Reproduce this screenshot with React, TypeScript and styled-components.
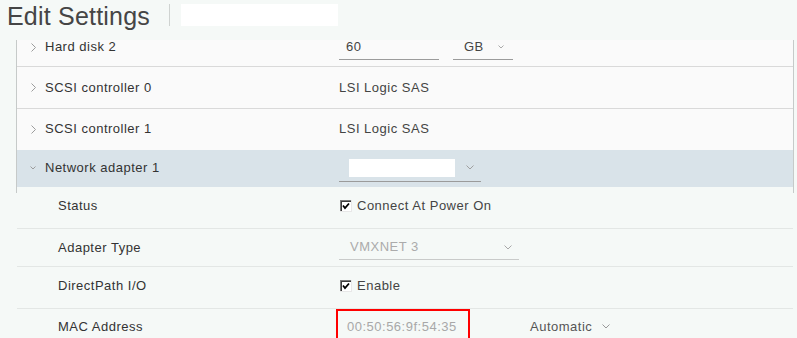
import styled, { createGlobalStyle } from 'styled-components'

const GlobalStyle = createGlobalStyle`
    html, body {
        margin: 0;
        padding: 0;
        background: #f5f9f7;
    }
    body {
        font-family: "Liberation Sans", Arial, sans-serif;
        font-size: 13px;
        letter-spacing: 0.5px;
        color: #333;
        overflow: hidden;
    }
`

const Page = styled.div`
    width: 797px;
    height: 338px;
    overflow: hidden;
`

const Header = styled.div`
    display: flex;
    align-items: flex-start;
    height: 40px;
    padding: 1px 0 0 7px;
    box-sizing: border-box;
`

const Title = styled.h1`
    margin: 0;
    font-size: 25px;
    line-height: 30px;
    font-weight: 300;
    color: #454545;
    letter-spacing: 0.2px;
`

const Divider = styled.div`
    width: 1px;
    height: 22px;
    margin: 3px 11px 0 19px;
    background: #cfd3d1;
`

const NameBox = styled.div`
    width: 157px;
    height: 22px;
    margin-top: 3px;
    background: #fff;
`

const Panel = styled.div`
    margin-left: 16px;
    width: 778px;
    box-sizing: border-box;
    border-left: 1px solid #c6cac9;
    border-right: 1px solid #c6cac9;
    padding-bottom: 6px;
    overflow: hidden;
`

/* the list is scrolled a little, so the first row is cut at the top */
const ScrollBody = styled.div`
    margin-top: -12px;
`

const Row = styled.div<{ $h: number; $bg?: string; $line?: string; $pb?: number }>`
    display: grid;
    grid-template-columns: 322px 1fr;
    align-items: center;
    height: ${(p) => p.$h}px;
    box-sizing: border-box;
    padding-bottom: ${(p) => p.$pb ?? 0}px;
    background: ${(p) => p.$bg ?? '#fafafa'};
    border-bottom: 1px solid ${(p) => p.$line ?? '#d9d9d9'};
`

const SubList = styled.div`
    margin-left: 17px;
    width: 776px;
`

const Label = styled.div<{ $indent: number }>`
    display: flex;
    align-items: center;
    gap: 9px;
    padding-left: ${(p) => p.$indent}px;
    line-height: 16px;
    color: #333;
`

const Value = styled.div`
    display: flex;
    align-items: center;
    line-height: 16px;
    color: #444;
`

const TextInput = styled.div<{ $w: number; $h: number }>`
    display: flex;
    align-items: center;
    width: ${(p) => p.$w}px;
    height: ${(p) => p.$h}px;
    box-sizing: border-box;
    padding-left: 7px;
    border-bottom: 1px solid #9b9b9b;
    color: #444;
`

const Select = styled.div<{ $w: number; $h: number; $ml?: number; $pl?: number; $pr?: number; $disabled?: boolean }>`
    display: flex;
    align-items: center;
    justify-content: space-between;
    width: ${(p) => p.$w}px;
    height: ${(p) => p.$h}px;
    margin-left: ${(p) => p.$ml ?? 0}px;
    box-sizing: border-box;
    padding: 0 ${(p) => p.$pr ?? 7}px 0 ${(p) => p.$pl ?? 11}px;
    border-bottom: 1px solid ${(p) => (p.$disabled ? '#c9cbca' : '#9b9b9b')};
    color: ${(p) => (p.$disabled ? '#ababab' : '#444')};
`

const BlankValue = styled.div`
    width: 106px;
    height: 18px;
    background: #fff;
`

const Check = styled.label`
    display: flex;
    align-items: center;
    gap: 5px;
    margin-left: 1px;
    color: #444;
`

const MacInput = styled.div`
    display: flex;
    align-items: center;
    width: 128px;
    height: 30px;
    box-sizing: border-box;
    padding-left: 8px;
    color: #a8a8a8;
    outline: 2px solid #f00;
    outline-offset: 1px;
`

const Plain = styled.div`
    display: flex;
    align-items: center;
    gap: 10px;
    margin-left: 63px;
    color: #555;
`

const ChevronRight = () => (
    <svg width="5" height="9" viewBox="0 0 5 9">
        <polyline points="0.5,0.5 4.5,4.5 0.5,8.5" fill="none" stroke="#9c9c9c" strokeWidth="1" />
    </svg>
)

const ChevronDown = ({ w = 8, color = '#a0a0a0' }: { w?: number; color?: string }) => (
    <svg width={w} height={w / 2 + 1} viewBox={`0 0 ${w} ${w / 2 + 1}`}>
        <polyline points={`0.5,0.5 ${w / 2},${w / 2} ${w - 0.5},0.5`} fill="none" stroke={color} strokeWidth="1" />
    </svg>
)

const CheckBox = () => (
    <svg width="12" height="12" viewBox="0 0 12 12">
        <rect x="0" y="0" width="12" height="12" fill="#e8e8e8" />
        <rect x="0" y="0" width="11" height="1" fill="#7a7a7a" />
        <rect x="0" y="0" width="1" height="11" fill="#7a7a7a" />
        <rect x="1" y="1" width="10" height="1" fill="#3c3c3c" />
        <rect x="1" y="1" width="1" height="10" fill="#3c3c3c" />
        <rect x="2" y="2" width="9" height="9" fill="#fff" />
        <polyline points="3,5.5 5,8 9,3.5" fill="none" stroke="#000" strokeWidth="1.8" />
    </svg>
)

export default function App() {
    return (
        <Page>
            <GlobalStyle />
            <Header>
                <Title>Edit Settings</Title>
                <Divider />
                <NameBox />
            </Header>

            <Panel>
                <ScrollBody>
                    <Row $h={39}>
                        <Label $indent={14}>
                            <ChevronRight />
                            Hard disk 2
                        </Label>
                        <Value>
                            <TextInput $w={100} $h={26}>60</TextInput>
                            <Select $w={60} $h={26} $ml={14} $pr={9}>
                                GB
                                <ChevronDown w={6} color="#aaa" />
                            </Select>
                        </Value>
                    </Row>
                    <Row $h={42}>
                        <Label $indent={14}>
                            <ChevronRight />
                            SCSI controller 0
                        </Label>
                        <Value>LSI Logic SAS</Value>
                    </Row>
                    <Row $h={41} $line="#fafafa">
                        <Label $indent={14}>
                            <ChevronRight />
                            SCSI controller 1
                        </Label>
                        <Value>LSI Logic SAS</Value>
                    </Row>
                    <Row $h={37} $bg="#d9e3e9" $line="#d9e3e9">
                        <Label $indent={13}>
                            <ChevronDown w={6} color="#9c9c9c" />
                            Network adapter 1
                        </Label>
                        <Value>
                            <Select $w={142} $h={27} $pl={10}>
                                <BlankValue />
                                <ChevronDown w={8} />
                            </Select>
                        </Value>
                    </Row>
                </ScrollBody>
            </Panel>

            <SubList>
                <Row $h={36} $pb={10} $bg="transparent" $line="#e3e7e5">
                    <Label $indent={41}>Status</Label>
                    <Value>
                        <Check>
                            <CheckBox />
                            Connect At Power On
                        </Check>
                    </Value>
                </Row>
                <Row $h={38} $bg="transparent" $line="#e3e7e5">
                    <Label $indent={41}>Adapter Type</Label>
                    <Value>
                        <Select $w={180} $h={24} $disabled>
                            VMXNET 3
                            <ChevronDown w={8} color="#a8a8a8" />
                        </Select>
                    </Value>
                </Row>
                <Row $h={42} $pb={4} $bg="transparent" $line="#e3e7e5">
                    <Label $indent={41}>DirectPath I/O</Label>
                    <Value>
                        <Check>
                            <CheckBox />
                            Enable
                        </Check>
                    </Value>
                </Row>
                <Row $h={40} $pb={4} $bg="transparent" $line="transparent">
                    <Label $indent={41}>MAC Address</Label>
                    <Value>
                        <MacInput>00:50:56:9f:54:35</MacInput>
                        <Plain>
                            Automatic
                            <ChevronDown w={8} color="#999" />
                        </Plain>
                    </Value>
                </Row>
            </SubList>
        </Page>
    )
}
